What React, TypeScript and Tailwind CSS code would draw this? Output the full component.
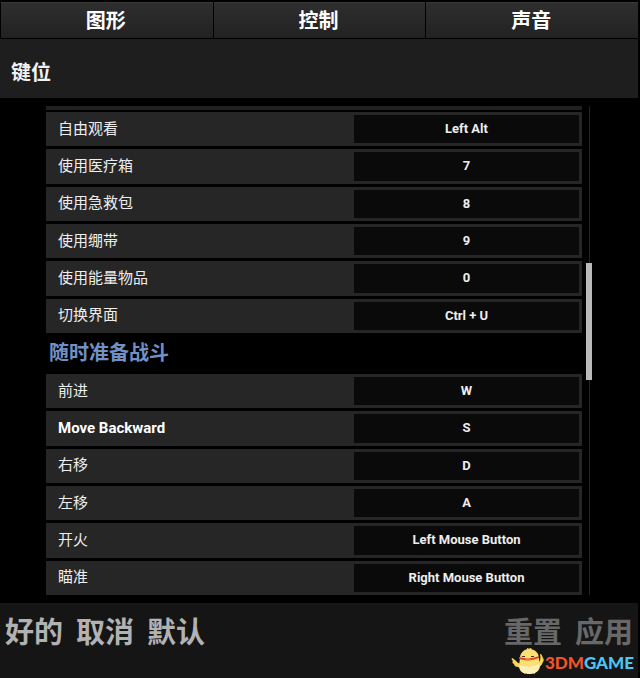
import type { FC } from "react";

type Binding = { id: string; label: string; value: string };

const tabs = ["图形", "控制", "声音"];

const general: Binding[] = [
  { id: "free-look", label: "自由观看", value: "Left Alt" },
  { id: "med-kit", label: "使用医疗箱", value: "7" },
  { id: "first-aid", label: "使用急救包", value: "8" },
  { id: "bandage", label: "使用绷带", value: "9" },
  { id: "boost", label: "使用能量物品", value: "0" },
  { id: "toggle-ui", label: "切换界面", value: "Ctrl + U" },
];

const combat: Binding[] = [
  { id: "forward", label: "前进", value: "W" },
  { id: "backward", label: "Move Backward", value: "S" },
  { id: "right", label: "右移", value: "D" },
  { id: "left", label: "左移", value: "A" },
  { id: "fire", label: "开火", value: "Left Mouse Button" },
  { id: "aim", label: "瞄准", value: "Right Mouse Button" },
];

const BindingRow: FC<Binding> = ({ id, label, value }) => {
  const latin = /^[A-Za-z ]+$/.test(label);
  return (
    <div className="grid grid-cols-[308fr_228fr] bg-[#262626]">
      <label
        htmlFor={id}
        className={`flex items-center pb-px pl-3 text-[15px] leading-5 ${latin ? "font-bold text-white" : "text-[#eeeeee]"}`}
      >
        {label}
      </label>
      <button
        id={id}
        type="button"
        className="my-[3px] mr-[3px] flex items-center justify-center bg-[#0a0a0a] text-[13px] leading-5 font-bold text-[#eeeeee]"
      >
        {value}
      </button>
    </div>
  );
};

const BindingGroup: FC<{ items: Binding[] }> = ({ items }) => (
  <div className="grid h-[221px] auto-rows-fr gap-[3px]">
    {items.map((item) => (
      <BindingRow key={item.id} {...item} />
    ))}
  </div>
);

const Scrollbar: FC = () => (
  <div className="flex w-[6px] flex-col items-center">
    <div className="w-px flex-[157] bg-[#242424]" />
    <div className="w-full flex-[118] bg-[#bababa]" />
    <div className="w-px flex-[215] bg-[#242424]" />
  </div>
);

const Logo: FC = () => (
  <div className="absolute right-1 bottom-1 flex items-end">
    <svg width="34" height="28" viewBox="0 0 34 28" aria-hidden="true">
      <path d="M10 17C7 17 5 13 1 11c-1 1 0 2 1 3-1 1-1 2 1 3 0 2 2 3 4 3l4 2z" fill="#f6d55c" />
      <path d="M26 17c3-2 4-5 3-10 2 0 2 2 3 4 1 1 1 3 0 4-1 3-3 5-5 6z" fill="#f6d55c" />
      <path d="M16 4c-1-3 1-4 2-2 1-2 4-1 2 1z" fill="#f3cb4b" />
      <path d="M18 2c6 0 10 4 10 9 0 3 1 5 1 8 0 5-5 8-11 8S8 24 8 19c0-3 1-5 1-8 0-5 4-9 9-9z" fill="#fae073" />
      <path d="M9 18c4 2 14 2 19-1 1 6-3 10-10 10-6 0-10-3-9-9z" fill="#fdf0b4" />
      <path d="M8 10c6 2 13 2 20-1v2c-7 3-14 3-20 1z" fill="#d8452a" />
      <path d="M11 9h3v1h-3zM20 9h3v1h-3z" fill="#4d3222" />
      <path d="M14 12q3-1 6 0-3 3-6 0z" fill="#ef8630" />
      <path d="M13 26h3v1h-3zM21 26h3v1h-3z" fill="#dc922c" />
    </svg>
    <span className="font-[Lato,sans-serif] text-[17px] leading-6 font-black">
      <span className="text-[#f05428]">3DM</span>
      <span className="text-[#4cc4f4]">GAME</span>
    </span>
  </div>
);

const App: FC = () => {
  return (
    <div className="flex min-h-screen flex-col bg-black pt-0.5 font-[Roboto,'Noto_Sans_CJK_SC',sans-serif]">
      <nav className="mr-0.5 ml-px grid grid-cols-3 gap-px">
        {tabs.map((tab) => (
          <button
            key={tab}
            type="button"
            className="h-9 border-t border-[#383838] bg-linear-to-b from-[#2e2e2e] to-[#222222] pr-0.5 text-[20px] leading-7 font-bold text-white"
          >
            {tab}
          </button>
        ))}
      </nav>
      <header className="mt-px mr-0.5 bg-[#1e1e1e] px-[11px] pt-5 pb-[11px]">
        <h1 className="text-[20px] leading-7 font-bold text-[#f2f2f2]">键位</h1>
      </header>

      <main className="mt-2 mb-2 flex gap-1 pr-12 pl-[46px]">
        <div className="flex-1">
          <div className="mb-0.5 h-1 bg-[#202020]" />
          <BindingGroup items={general} />
          <h2 className="h-[41px] pl-[3px] text-[20px] leading-[41px] font-bold text-[#7090c6]">随时准备战斗</h2>
          <BindingGroup items={combat} />
        </div>
        <Scrollbar />
      </main>

      <footer className="relative mr-0.5 flex flex-1 items-start justify-between bg-[#151515] px-[5px] pt-2 pb-6 text-[29px] leading-[44px] font-bold">
        <div className="flex gap-[13px] text-[#b2b2b2]">
          <button type="button">好的</button>
          <button type="button">取消</button>
          <button type="button">默认</button>
        </div>
        <div className="flex gap-[13px] text-[#686868]">
          <button type="button">重置</button>
          <button type="button">应用</button>
        </div>
        <Logo />
      </footer>
    </div>
  );
};

export default App;
